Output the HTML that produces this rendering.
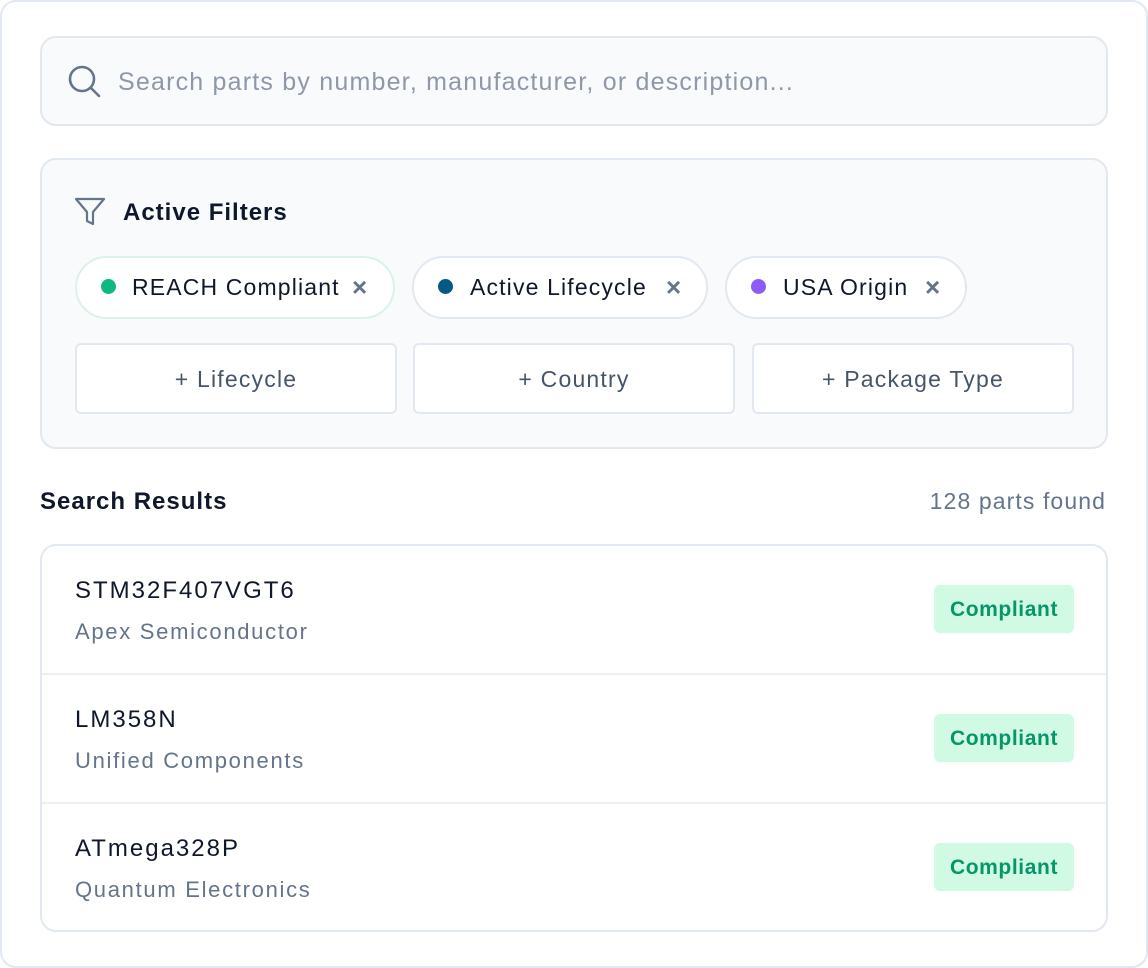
<!DOCTYPE html>
<html><head><meta charset="utf-8"><style>
*{box-sizing:border-box;margin:0;padding:0}
body{width:1148px;height:968px;background:#fff;font-family:"Liberation Sans",sans-serif;position:relative;overflow:hidden}
.abs{position:absolute}
.outer{left:0;top:0;width:1148px;height:968px;border:2px solid #e2e8f0;border-radius:16px}
.search{left:40px;top:36px;width:1068px;height:90px;background:#f8fafc;border:2px solid #e2e8f0;border-radius:16px}
.ph{left:118px;top:68px;font-size:25px;letter-spacing:1.2px;color:#8e98a8;white-space:nowrap}
.panel{left:40px;top:158px;width:1068px;height:291px;background:#f8fafc;border:2px solid #e2e8f0;border-radius:16px}
.h{font-size:24px;font-weight:bold;color:#0f172a;white-space:nowrap;letter-spacing:1px}
.chip{top:256px;height:63px;border:2px solid #e2e8f0;border-radius:32px;background:#fff}
.dot{width:15px;height:15px;border-radius:50%;top:279px}
.ct{top:274px;font-size:23px;letter-spacing:1.15px;color:#0f172a;white-space:nowrap}
.x{top:272px;font-size:26px;font-weight:bold;color:#64748b}
.btn{top:343px;height:71px;width:322px;background:#fff;border:2px solid #e2e8f0;border-radius:6px;font-size:23px;letter-spacing:1.2px;color:#475569;display:flex;align-items:center;justify-content:center;padding-top:2px}
.list{left:40px;top:544px;width:1068px;height:388px;border:2px solid #e2e8f0;border-radius:16px}
.sep{left:42px;width:1064px;height:2px;background:#edf1f6}
.pn{left:75px;font-size:24px;letter-spacing:2px;color:#0f172a}
.mf{left:75px;font-size:22px;letter-spacing:1.7px;color:#64748b}
.badge{left:934px;width:140px;height:48px;background:#d1fae5;border-radius:6px;color:#059669;font-weight:bold;font-size:21px;letter-spacing:0.6px;display:flex;align-items:center;justify-content:center;padding-top:2px}
</style></head><body>
<div class="abs outer"></div>
<div class="abs search"></div>
<svg class="abs" style="left:66px;top:64px" width="36" height="36" viewBox="0 0 36 36" fill="none" stroke="#64748b" stroke-width="2.6" stroke-linecap="round"><circle cx="16" cy="15" r="12"/><path d="M25 24l8 8"/></svg>
<div class="abs ph">Search parts by number, manufacturer, or description...</div>
<div class="abs panel"></div>
<svg class="abs" style="left:74px;top:196px" width="32" height="32" viewBox="0 0 32 32" fill="none" stroke="#64748b" stroke-width="2.2" stroke-linejoin="round"><path d="M2 3h28L19 16v12l-6-3V16z"/></svg>
<div class="abs h" style="left:123px;top:199px">Active Filters</div>
<div class="abs chip" style="left:75px;width:320px;border-color:#d8f3e7"></div>
<div class="abs dot" style="left:101px;background:#10b981"></div>
<div class="abs ct" style="left:132px">REACH Compliant</div>
<div class="abs x" style="left:352px">×</div>
<div class="abs chip" style="left:412px;width:296px"></div>
<div class="abs dot" style="left:438px;background:#075985"></div>
<div class="abs ct" style="left:470px">Active Lifecycle</div>
<div class="abs x" style="left:666px">×</div>
<div class="abs chip" style="left:725px;width:242px"></div>
<div class="abs dot" style="left:751px;background:#8b5cf6"></div>
<div class="abs ct" style="left:783px">USA Origin</div>
<div class="abs x" style="left:925px">×</div>
<div class="abs btn" style="left:75px">+ Lifecycle</div>
<div class="abs btn" style="left:413px">+ Country</div>
<div class="abs btn" style="left:752px">+ Package Type</div>
<div class="abs h" style="left:40px;top:488px">Search Results</div>
<div class="abs" style="right:42px;top:488px;font-size:23px;letter-spacing:1.1px;color:#64748b">128 parts found</div>
<div class="abs list"></div>
<div class="abs sep" style="top:673px"></div>
<div class="abs sep" style="top:802px"></div>
<div class="abs pn" style="top:577px">STM32F407VGT6</div>
<div class="abs mf" style="top:619px">Apex Semiconductor</div>
<div class="abs badge" style="top:585px">Compliant</div>
<div class="abs pn" style="top:706px">LM358N</div>
<div class="abs mf" style="top:748px">Unified Components</div>
<div class="abs badge" style="top:714px">Compliant</div>
<div class="abs pn" style="top:835px">ATmega328P</div>
<div class="abs mf" style="top:877px">Quantum Electronics</div>
<div class="abs badge" style="top:843px">Compliant</div>
</body></html>
